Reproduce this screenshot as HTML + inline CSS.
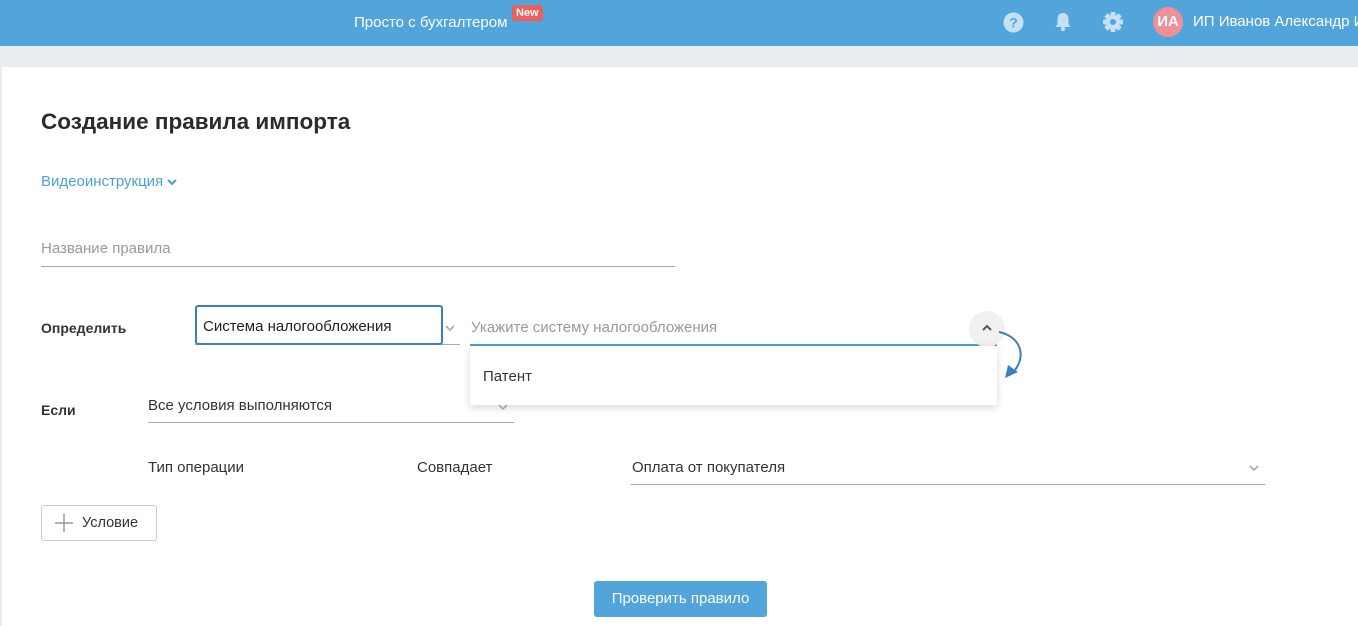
<!DOCTYPE html>
<html><head><meta charset="utf-8"><style>
*{box-sizing:border-box;margin:0;padding:0}
body{width:1358px;height:626px;overflow:hidden;background:#eaeef2;font-family:"Liberation Sans",Arial,sans-serif;position:relative;color:#333}
.hdr{position:absolute;left:0;top:0;width:1358px;height:46px;background:#52a5db;color:#fff}
.main{position:absolute;left:2px;top:67px;width:1356px;height:559px;background:#fff}
.a{position:absolute;white-space:nowrap}
.line{position:absolute;height:1px;background:#aaa}
</style></head><body>
<div class="hdr">
 <div class="a" style="left:354px;top:14px;font-size:15px">Просто с бухгалтером</div>
 <div class="a" style="left:512px;top:5px;background:#e8605c;border-radius:3px;font-size:11px;font-weight:bold;padding:1px 4px;line-height:14px">New</div>
 <svg class="a" style="left:1003px;top:12px" width="21" height="21" viewBox="0 0 21 21"><circle cx="10.5" cy="10.5" r="10" fill="#c7e1f4"/><text x="10.5" y="15.5" text-anchor="middle" font-family="Liberation Sans" font-weight="bold" font-size="14" fill="#52a5db">?</text></svg>
 <svg class="a" style="left:1054px;top:11px" width="18" height="22" viewBox="0 0 18 22"><path d="M9 2c-3.5 0-5.5 2.5-5.5 6v5L1.5 16h15l-2-3V8C14.5 4.5 12.5 2 9 2z" fill="#c7e1f4"/><circle cx="9" cy="18" r="2.2" fill="#c7e1f4"/></svg>
 <svg class="a" style="left:1102px;top:11px" width="22" height="22" viewBox="0 0 22 22"><g fill="#c7e1f4" transform="translate(11 11)"><rect x="-2.5" y="-10" width="5" height="20" rx="1"/><rect x="-2.5" y="-10" width="5" height="20" rx="1" transform="rotate(45)"/><rect x="-2.5" y="-10" width="5" height="20" rx="1" transform="rotate(90)"/><rect x="-2.5" y="-10" width="5" height="20" rx="1" transform="rotate(135)"/><circle r="7"/></g><circle cx="11" cy="11" r="3" fill="#52a5db"/></svg>
 <div class="a" style="left:1153px;top:7px;width:30px;height:30px;border-radius:50%;background:#ef8f96;font-weight:bold;font-size:15px;text-align:center;line-height:30px">ИА</div>
 <div class="a" style="left:1193px;top:13px;font-size:15px">ИП Иванов Александр И</div>
</div>
<div class="main"></div>
<div class="a" style="left:41px;top:109px;font-size:22.5px;font-weight:bold;color:#2b2b2b">Создание правила импорта</div>
<div class="a" style="left:41px;top:173px;font-size:15px;color:#4b9fd8">Видеоинструкция <svg width="10" height="8" viewBox="0 0 10 8"><path d="M1 2l4 4 4-4" stroke="#4b9fd8" stroke-width="2" fill="none"/></svg></div>
<div class="a" style="left:41px;top:240px;font-size:15px;color:#999">Название правила</div>
<div class="line" style="left:41px;top:266px;width:634px"></div>
<div class="a" style="left:41px;top:320px;font-size:14px;font-weight:bold">Определить</div>
<div class="line" style="left:195px;top:344px;width:265px"></div>
<div class="a" style="left:195px;top:305px;width:248px;height:40px;border:2px solid #3c7ec0;border-radius:3px;font-size:15px;padding:11px 0 0 6px;color:#222">Система налогообложения</div>
<svg class="a" style="left:445px;top:324px" width="10" height="8" viewBox="0 0 10 8"><path d="M1 2l4 4 4-4" stroke="#aaa" stroke-width="1.6" fill="none"/></svg>
<div class="a" style="left:471px;top:319px;font-size:15px;color:#999">Укажите систему налогообложения</div>
<div class="a" style="left:470px;top:344px;width:527px;height:2px;background:#4a9fd9"></div>
<div class="a" style="left:969px;top:311px;width:36px;height:36px;border-radius:50%;background:#f1f1f1"></div>
<svg class="a" style="left:981px;top:324px" width="12" height="8" viewBox="0 0 12 8"><path d="M2 6l4-4 4 4" stroke="#555" stroke-width="2" fill="none"/></svg>
<div class="a" style="left:470px;top:346px;width:527px;height:59px;background:#fff;box-shadow:0 3px 8px rgba(0,0,0,.15)"></div>
<div class="a" style="left:483px;top:368px;font-size:15px;color:#333">Патент</div>
<svg class="a" style="left:995px;top:328px" width="35" height="52" viewBox="0 0 35 52"><path d="M4 4c20 4 28 22 16 38" stroke="#3c7ec0" stroke-width="2" fill="none"/><path d="M10 50l3-13 10 7z" fill="#3c7ec0"/></svg>
<div class="a" style="left:41px;top:402px;font-size:14px;font-weight:bold">Если</div>
<div class="a" style="left:148px;top:397px;font-size:15px;color:#333">Все условия выполняются</div>
<svg class="a" style="left:498px;top:403px" width="10" height="8" viewBox="0 0 10 8"><path d="M1 2l4 4 4-4" stroke="#aaa" stroke-width="1.6" fill="none"/></svg>
<div class="line" style="left:148px;top:422px;width:366px"></div>
<div class="a" style="left:148px;top:459px;font-size:15px;color:#333">Тип операции</div>
<div class="a" style="left:417px;top:459px;font-size:15px;color:#333">Совпадает</div>
<div class="a" style="left:632px;top:459px;font-size:15px;color:#333">Оплата от покупателя</div>
<svg class="a" style="left:1249px;top:464px" width="10" height="8" viewBox="0 0 10 8"><path d="M1 2l4 4 4-4" stroke="#aaa" stroke-width="1.6" fill="none"/></svg>
<div class="line" style="left:631px;top:484px;width:634px"></div>
<div class="a" style="left:41px;top:505px;width:116px;height:36px;border:1px solid #ccc;border-radius:3px;font-size:14.5px;color:#333;padding:9px 0 0 40px">Условие</div>
<svg class="a" style="left:54px;top:513px" width="20" height="20" viewBox="0 0 20 20"><path d="M10 1v18M1 10h18" stroke="#999" stroke-width="1.5"/></svg>
<div class="a" style="left:594px;top:581px;width:173px;height:36px;background:#52a5db;border-radius:3px;color:#fff;font-size:15px;text-align:center;line-height:36px">Проверить правило</div>
</body></html>
